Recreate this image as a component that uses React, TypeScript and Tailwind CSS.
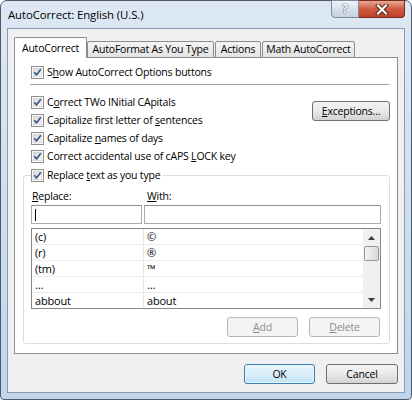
import React from 'react';

const ui = "font-['Open_Sans',sans-serif] text-[10.5px] tracking-[-0.2px] text-black leading-none";

const Check: React.FC = () => (
  <svg width="13" height="13" viewBox="0 0 13 13" className="shrink-0">
    <defs>
      <linearGradient id="cbfill" x1="0" y1="0" x2="1" y2="1">
        <stop offset="0" stopColor="#d8d8d8" />
        <stop offset="1" stopColor="#fbfbfb" />
      </linearGradient>
    </defs>
    <rect x="0.5" y="0.5" width="12" height="12" fill="#fff" stroke="#8e8f8f" />
    <rect x="2.2" y="2.2" width="8.6" height="8.6" fill="url(#cbfill)" stroke="#c6c6c6" strokeWidth="0.6" />
    <path d="M3.3 6.3 L5.5 8.9 L9.8 3.3" fill="none" stroke="#3d5a8c" strokeWidth="1.7" strokeLinejoin="round" />
  </svg>
);

const CheckRow: React.FC<{ children: React.ReactNode }> = ({ children }) => (
  <div className="flex h-[18px] items-center gap-[3px]">
    <Check />
    <span className="whitespace-nowrap">{children}</span>
  </div>
);

const Button: React.FC<{ children: React.ReactNode; w: string; disabled?: boolean; primary?: boolean }> = ({
  children,
  w,
  disabled,
  primary,
}) => {
  let cls = 'border-[#707070] bg-gradient-to-b from-[#f3f3f3] via-[#e9e9e9] to-[#d3d3d3] text-black';
  if (disabled) cls = 'border-[#b3b7ba] bg-[#f4f4f4] text-[#8d8d8d]';
  if (primary) cls = 'border-[#3c7fb1] bg-gradient-to-b from-[#e8f5fc] via-[#d9effb] to-[#bee3f6] text-black shadow-[inset_0_0_0_1px_#eaf6fd]';
  return (
    <div className={`${w} flex h-[20px] items-center justify-center rounded-[3px] border ${cls}`}>{children}</div>
  );
};

const rows: [string, string][] = [
  ['(c)', '©'],
  ['(r)', '®'],
  ['(tm)', '™'],
  ['…', '…'],
  ['abbout', 'about'],
];

export default function App() {
  return (
    <div className={`h-[400px] w-[412px] bg-white ${ui}`}>
      <div className="flex h-[400px] w-[412px] flex-col rounded-t-[7px] rounded-b-[4px] border border-[#4f5966] bg-gradient-to-b from-[#dde8f4] via-[#cfdff0] to-[#bfd5ec] px-[6px] pb-[6px]">
        {/* Title bar */}
        <div className="flex h-[27px] items-start justify-between">
          <span className="mt-[8px] ml-[1px] text-[11.4px] tracking-[-0.1px]">AutoCorrect: English (U.S.)</span>
          <div className="-mt-px flex">
            <div className="flex h-[18px] w-[28px] items-center justify-center rounded-bl-[4px] border border-[#7b8a9d] bg-gradient-to-b from-[#f0f4f9] via-[#d7e1ec] to-[#c3d1e1]">
              <span className="text-[12px] font-bold text-white [text-shadow:0_0_1px_#2c3b50,0_0_1px_#2c3b50]">?</span>
            </div>
            <div className="flex h-[18px] w-[46px] items-center justify-center rounded-br-[4px] border border-l-0 border-[#7a2a1c] bg-gradient-to-b from-[#e9a895] via-[#cf5a40] to-[#c3412a]">
              <svg width="14" height="11" viewBox="0 0 14 11">
                <path d="M3 1.5 L11 9.5 M11 1.5 L3 9.5" stroke="#4a1a10" strokeWidth="4" strokeLinecap="square" />
                <path d="M3 1.5 L11 9.5 M11 1.5 L3 9.5" stroke="#ffffff" strokeWidth="2.2" strokeLinecap="square" />
              </svg>
            </div>
          </div>
        </div>

        {/* Client area */}
        <div className="flex flex-1 flex-col border border-[#8a9bb0] bg-[#f0f0f0] pt-[8px] pl-[6px]">
          {/* Tabs */}
          <div className="flex h-[21px] items-end">
            <div className="relative z-10 flex h-[21px] w-[73px] items-center justify-center rounded-t-[2px] border border-b-0 border-[#898c95] bg-white">
              AutoCorrect
            </div>
            <div className="flex h-[17px] w-[127px] items-center justify-center rounded-t-[2px] border border-[#898c95] bg-gradient-to-b from-[#f4f4f4] to-[#e3e3e3]">
              AutoFormat As You Type
            </div>
            <div className="ml-px flex h-[17px] w-[46px] items-center justify-center rounded-t-[2px] border border-[#898c95] bg-gradient-to-b from-[#f4f4f4] to-[#e3e3e3]">
              Actions
            </div>
            <div className="ml-px flex h-[17px] w-[93px] items-center justify-center rounded-t-[2px] border border-[#898c95] bg-gradient-to-b from-[#f4f4f4] to-[#e3e3e3]">
              Math AutoCorrect
            </div>
          </div>

          {/* Tab panel */}
          <div className="-mt-px flex h-[297px] w-[384px] flex-col border border-[#898c95] bg-white">
            <div className="mt-[5px] pl-[16px]">
              <CheckRow>
                S<u>h</u>ow AutoCorrect Options buttons
              </CheckRow>
            </div>
            <div className="mt-[3px] ml-[15px] h-px w-[359px] bg-[#a0a0a0]" />

            <div className="mt-[8px] flex justify-between pr-[7px] pl-[16px]">
              <div className="flex flex-col">
                <CheckRow>
                  C<u>o</u>rrect TWo INitial CApitals
                </CheckRow>
                <CheckRow>
                  Capitalize first letter of <u>s</u>entences
                </CheckRow>
                <CheckRow>
                  Capitalize <u>n</u>ames of days
                </CheckRow>
                <CheckRow>
                  Correct accidental use of cAPS <u>L</u>OCK key
                </CheckRow>
              </div>
              <div className="mt-[8px]">
                <Button w="w-[78px]">
                  <u>E</u>xceptions...
                </Button>
              </div>
            </div>

            {/* Replace group */}
            <fieldset className="mt-px ml-[8px] h-[178px] w-[367px] rounded-[3px] border border-[#d5dfe5]">
              <legend className="ml-[7px] pr-[3px]">
                <span className="inline-flex h-[18px] items-center gap-[3px] align-top">
                  <Check />
                  <span>
                    Replace <u>t</u>ext as you type
                  </span>
                </span>
              </legend>

              <div className="mt-[5px] flex h-[15px] items-center pl-[8px]">
                <span className="w-[113px]">
                  <u>R</u>eplace:
                </span>
                <span className="pl-[2px]">
                  <u>W</u>ith:
                </span>
              </div>
              <div className="mt-px flex gap-[2px] pl-[7px]">
                <div className="flex h-[19px] w-[111px] items-center border border-[#abadb3] border-t-[#8d9096] bg-white pl-[3px]">
                  <div className="h-[12px] w-px bg-black" />
                </div>
                <div className="h-[19px] w-[237px] border border-[#abadb3] border-t-[#8d9096] bg-white" />
              </div>

              {/* List */}
              <div className="mt-[4px] ml-[7px] flex h-[81px] w-[350px] border border-[#828790] bg-white">
                <div className="flex flex-1 flex-col overflow-hidden">
                  {rows.map(([a, b]) => (
                    <div key={a + b} className="flex h-[16px] shrink-0 border-b border-[#ececec]">
                      <div className="flex w-[112px] items-center border-r border-[#e6e6e6] pl-[3px] text-[11px]">{a}</div>
                      <div className="flex flex-1 items-center pl-[3px] text-[11px]">{b}</div>
                    </div>
                  ))}
                </div>
                {/* Scrollbar */}
                <div className="flex w-[17px] flex-col bg-[#f0f0f0]">
                  <div className="flex h-[17px] items-center justify-center">
                    <svg width="7" height="4" viewBox="0 0 7 4">
                      <path d="M0 4 L3.5 0 L7 4 Z" fill="#3a3a3a" />
                    </svg>
                  </div>
                  <div className="mx-[1px] h-[15px] rounded-[2px] border border-[#979797] bg-gradient-to-r from-[#f3f3f3] to-[#dadada]" />
                  <div className="flex-1" />
                  <div className="flex h-[17px] items-center justify-center">
                    <svg width="7" height="4" viewBox="0 0 7 4">
                      <path d="M0 0 L7 0 L3.5 4 Z" fill="#3a3a3a" />
                    </svg>
                  </div>
                </div>
              </div>

              <div className="mt-[8px] flex justify-end gap-[11px] pr-[9px]">
                <Button w="w-[71px]" disabled>
                  <u>A</u>dd
                </Button>
                <Button w="w-[71px]" disabled>
                  <u>D</u>elete
                </Button>
              </div>
            </fieldset>
          </div>

          {/* Dialog buttons */}
          <div className="mt-[10px] flex justify-end gap-[11px] pr-[6px]">
            <Button w="w-[71px]" primary>
              OK
            </Button>
            <Button w="w-[72px]">Cancel</Button>
          </div>
        </div>
      </div>
    </div>
  );
}
